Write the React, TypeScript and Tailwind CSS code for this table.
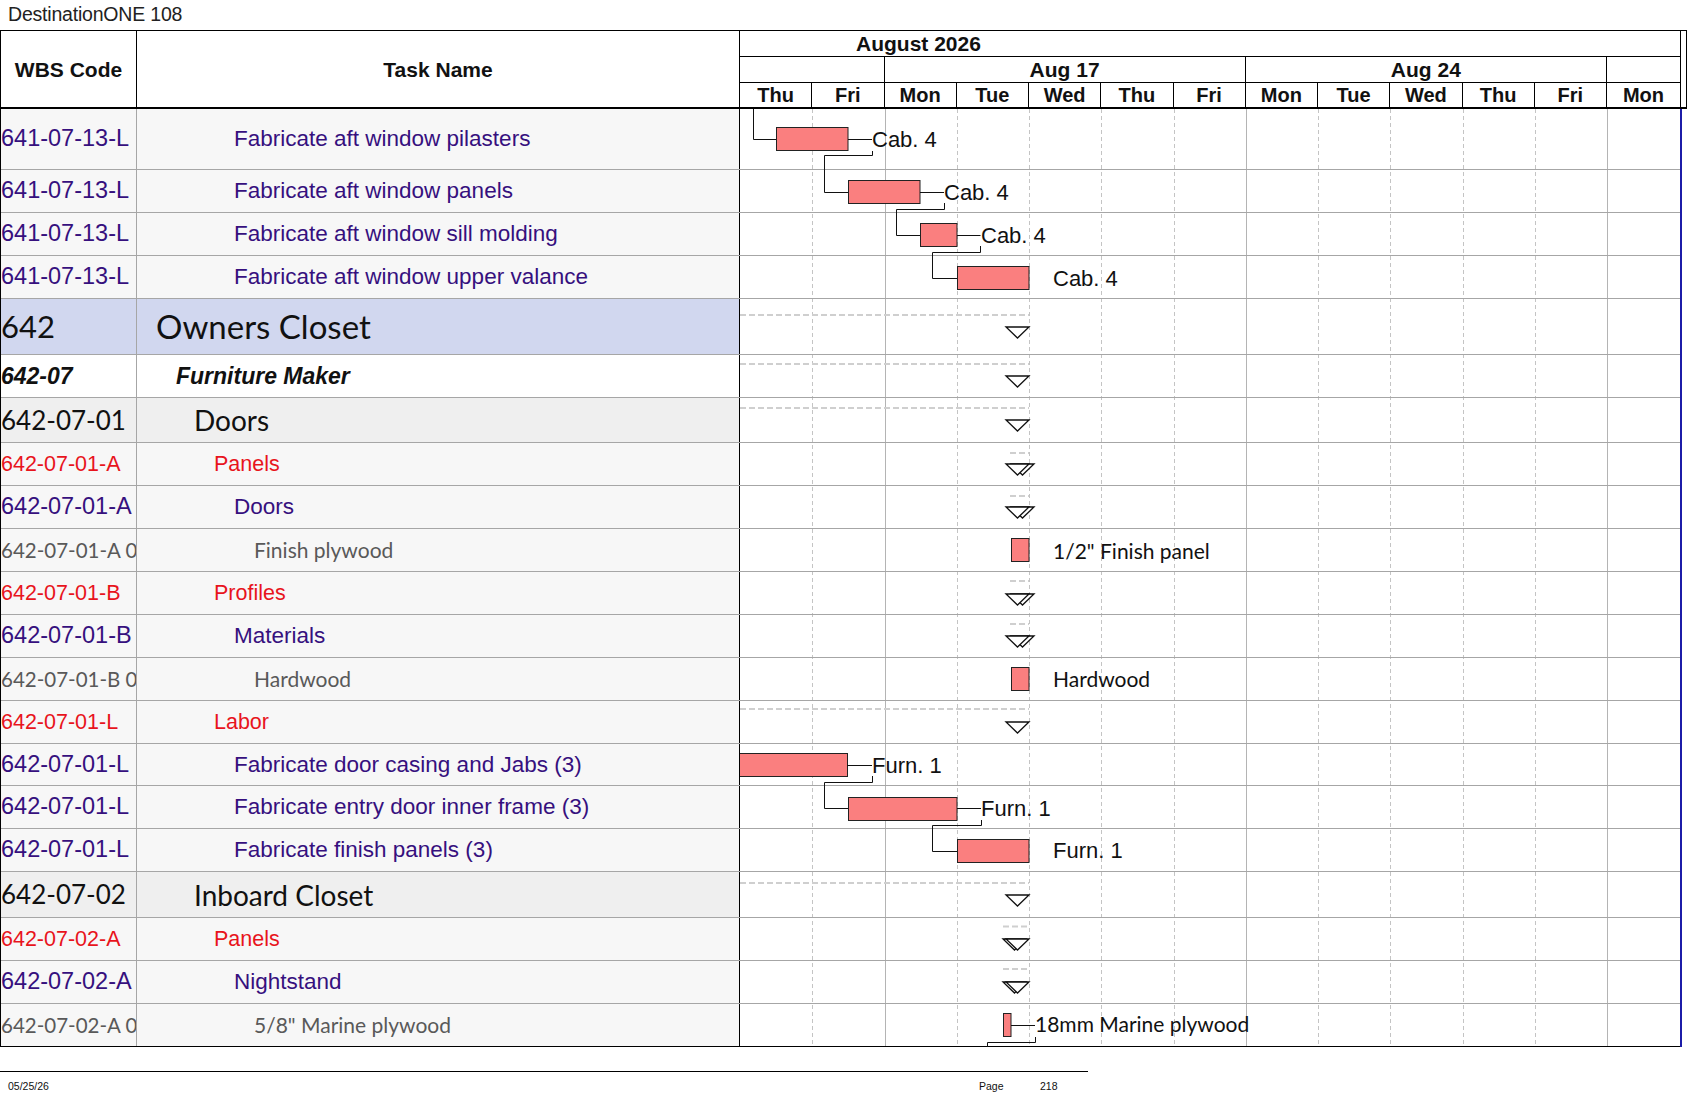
import React from "react";

type Kind = "l1" | "l2" | "l3" | "l4" | "l5" | "l6";

type Row = { h: number; wbs: string; name: string; kind: Kind };

const rows: Row[] = [
  { h: 61, wbs: "641-07-13-L", name: "Fabricate aft window pilasters", kind: "l5" },
  { h: 43, wbs: "641-07-13-L", name: "Fabricate aft window panels", kind: "l5" },
  { h: 43, wbs: "641-07-13-L", name: "Fabricate aft window sill molding", kind: "l5" },
  { h: 43, wbs: "641-07-13-L", name: "Fabricate aft window upper valance", kind: "l5" },
  { h: 56, wbs: "642", name: "Owners Closet", kind: "l1" },
  { h: 43, wbs: "642-07", name: "Furniture Maker", kind: "l2" },
  { h: 45, wbs: "642-07-01", name: "Doors", kind: "l3" },
  { h: 43, wbs: "642-07-01-A", name: "Panels", kind: "l4" },
  { h: 43, wbs: "642-07-01-A", name: "Doors", kind: "l5" },
  { h: 43, wbs: "642-07-01-A 0", name: "Finish plywood", kind: "l6" },
  { h: 43, wbs: "642-07-01-B", name: "Profiles", kind: "l4" },
  { h: 43, wbs: "642-07-01-B", name: "Materials", kind: "l5" },
  { h: 43, wbs: "642-07-01-B 0", name: "Hardwood", kind: "l6" },
  { h: 43, wbs: "642-07-01-L", name: "Labor", kind: "l4" },
  { h: 42, wbs: "642-07-01-L", name: "Fabricate door casing and Jabs (3)", kind: "l5" },
  { h: 43, wbs: "642-07-01-L", name: "Fabricate entry door inner frame (3)", kind: "l5" },
  { h: 43, wbs: "642-07-01-L", name: "Fabricate finish panels (3)", kind: "l5" },
  { h: 46, wbs: "642-07-02", name: "Inboard Closet", kind: "l3" },
  { h: 43, wbs: "642-07-02-A", name: "Panels", kind: "l4" },
  { h: 43, wbs: "642-07-02-A", name: "Nightstand", kind: "l5" },
  { h: 43, wbs: "642-07-02-A 0", name: '5/8" Marine plywood', kind: "l6" },
];

// per-level styling of the table part
const styles: Record<Kind, { bg: string; wbs: string; name: string }> = {
  l1: {
    bg: "bg-[#d1d7ef]",
    wbs: "font-['Lato','Liberation_Sans',sans-serif] text-[31px] text-[#111]",
    name: "font-['Lato','Liberation_Sans',sans-serif] text-[33px] text-[#111] pl-[19px]",
  },
  l2: {
    bg: "bg-white",
    wbs: "font-['Liberation_Sans',Arial,sans-serif] text-[23px] font-bold italic text-[#111]",
    name: "font-['Liberation_Sans',Arial,sans-serif] text-[23px] font-bold italic text-[#111] pl-[39px]",
  },
  l3: {
    bg: "bg-[#efefef]",
    wbs: "font-['Lato','Liberation_Sans',sans-serif] text-[26px] text-[#111]",
    name: "font-['Lato','Liberation_Sans',sans-serif] text-[28px] text-[#111] pl-[57px]",
  },
  l4: {
    bg: "bg-[#f7f7f7]",
    wbs: "font-['Liberation_Sans',Arial,sans-serif] text-[21.5px] text-[#e8141c]",
    name: "font-['Liberation_Sans',Arial,sans-serif] text-[21.5px] text-[#e8141c] pl-[77px]",
  },
  l5: {
    bg: "bg-[#f7f7f7]",
    wbs: "font-['Liberation_Sans',Arial,sans-serif] text-[23.5px] text-[#36107e]",
    name: "font-['Liberation_Sans',Arial,sans-serif] text-[22.5px] text-[#36107e] pl-[97px]",
  },
  l6: {
    bg: "bg-[#f7f7f7]",
    wbs: "font-['Lato','Liberation_Sans',sans-serif] text-[20.5px] text-[#595959]",
    name: "font-['Lato','Liberation_Sans',sans-serif] text-[21px] text-[#595959] pl-[117px]",
  },
};

const DAY = 72.25;
const days = ["Thu", "Fri", "Mon", "Tue", "Wed", "Thu", "Fri", "Mon", "Tue", "Wed", "Thu", "Fri", "Mon"];

const ARIAL = "'Liberation Sans', Arial, sans-serif";
const CAL = "Lato, 'Liberation Sans', sans-serif";

function Tri({ x, y }: { x: number; y: number }) {
  return (
    <polygon
      points={`${x},${y} ${x + 23},${y} ${x + 11.5},${y + 11}`}
      fill="white"
      stroke="#111"
      strokeWidth={1.3}
    />
  );
}

function Bar({ x1, x2, y }: { x1: number; x2: number; y: number }) {
  return <rect x={x1 + 0.5} y={y + 0.5} width={x2 - x1} height={23} fill="#fa7f7f" stroke="#222" strokeWidth={1} />;
}

function Link({ pts }: { pts: number[][] }) {
  return <polyline points={pts.map((p) => p.join(",")).join(" ")} fill="none" stroke="#111" strokeWidth={1} />;
}

function Chart() {
  const H = rows.reduce((s, r) => s + r.h, 0);
  let acc = 0;
  const bottoms = rows.map((r) => (acc += r.h));

  return (
    <svg width={940} height={H} className="block">
      {/* day grid */}
      {Array.from({ length: 12 }, (_, i) => {
        const x = Math.round(DAY * (i + 1)) + 0.5;
        const week = i === 1 || i === 6 || i === 11;
        return (
          <line
            key={i}
            x1={x}
            x2={x}
            y1={0}
            y2={H}
            stroke={week ? "#b4b4b4" : "#c4c4c4"}
            strokeWidth={1}
            strokeDasharray={week ? undefined : "4 3"}
          />
        );
      })}
      {/* row lines */}
      {bottoms.map((b, i) => (
        <line
          key={i}
          x1={0}
          x2={940}
          y1={b - 0.5}
          y2={b - 0.5}
          stroke={i === bottoms.length - 1 ? "#000" : "#a6a6a6"}
          strokeWidth={1}
        />
      ))}

      {/* summary bars */}
      {[206, 255, 299, 600, 774].map((y) => (
        <line key={y} x1={0} x2={289} y1={y} y2={y} stroke="#cfcfcf" strokeWidth={2} strokeDasharray="6 3" />
      ))}
      {[344, 387, 472, 515].map((y) => (
        <line key={y} x1={270} x2={289} y1={y} y2={y} stroke="#cfcfcf" strokeWidth={2} strokeDasharray="6 3" />
      ))}
      {[817.5, 860].map((y) => (
        <line key={y} x1={263} x2={289} y1={y} y2={y} stroke="#cfcfcf" strokeWidth={2} strokeDasharray="6 3" />
      ))}
      {[218, 267, 311, 613, 786].map((y) => (
        <Tri key={y} x={266} y={y} />
      ))}
      {[355, 398, 485, 527].map((y) => (
        <g key={y}>
          <Tri x={271} y={y} />
          <Tri x={266} y={y} />
        </g>
      ))}
      {[830, 873].map((y) => (
        <g key={y}>
          <Tri x={263} y={y} />
          <Tri x={266} y={y} />
        </g>
      ))}

      {/* 641-07-13-L chain */}
      <Link pts={[[13.5, 0], [13.5, 30.5], [36, 30.5]]} />
      <Bar x1={36} x2={107.5} y={18} />
      <Link pts={[[108, 30.5], [132, 30.5]]} />
      <Link pts={[[132.5, 42], [132.5, 46.5], [84.5, 46.5], [84.5, 83.5], [108, 83.5]]} />
      <Bar x1={108} x2={179.5} y={71} />
      <Link pts={[[180, 83.5], [204, 83.5]]} />
      <Link pts={[[204.5, 94], [204.5, 100.5], [156.5, 100.5], [156.5, 126.5], [180, 126.5]]} />
      <Bar x1={180} x2={216.5} y={114} />
      <Link pts={[[217, 126.5], [240.5, 126.5]]} />
      <Link pts={[[240.5, 137], [240.5, 143.5], [192.5, 143.5], [192.5, 169.5], [217, 169.5]]} />
      <Bar x1={217} x2={288.5} y={157} />

      {/* materials */}
      <Bar x1={271} x2={288.5} y={429} />
      <Bar x1={271} x2={288.5} y={558} />

      {/* labor chain */}
      <Bar x1={-2} x2={107} y={644} />
      <Link pts={[[107, 656.5], [132, 656.5]]} />
      <Link pts={[[132.5, 667], [132.5, 673.5], [84.5, 673.5], [84.5, 699.5], [108, 699.5]]} />
      <Bar x1={108} x2={216.5} y={688} />
      <Link pts={[[217, 699.5], [241, 699.5]]} />
      <Link pts={[[241.5, 711], [241.5, 716.5], [192.5, 716.5], [192.5, 742.5], [217, 742.5]]} />
      <Bar x1={217} x2={288.5} y={730} />

      {/* nightstand */}
      <Bar x1={263} x2={270.5} y={904} />
      <Link pts={[[271, 916.5], [295, 916.5]]} />
      <Link pts={[[295.5, 928], [295.5, 933.5], [247.5, 933.5], [247.5, 938]]} />

      {/* labels */}
      <g fontFamily={ARIAL} fontSize={22} fill="#111">
        <text x={132} y={37.5}>Cab. 4</text>
        <text x={204} y={91}>Cab. 4</text>
        <text x={241} y={134}>Cab. 4</text>
        <text x={313} y={177}>Cab. 4</text>
        <text x={132} y={663.5}>Furn. 1</text>
        <text x={241} y={706.5}>Furn. 1</text>
        <text x={313} y={749}>Furn. 1</text>
      </g>
      <g fontFamily={CAL} fontSize={21} fill="#111">
        <text x={313} y={450}>1/2" Finish panel</text>
        <text x={313} y={578}>Hardwood</text>
        <text x={295} y={923}>18mm Marine plywood</text>
      </g>
    </svg>
  );
}

function Header() {
  return (
    <div className="flex h-[78px] border-b-2 border-black leading-none">
      <div className="w-[136px] border-r border-black flex items-center justify-center font-['Liberation_Sans',Arial,sans-serif] font-bold text-[21px] text-[#111]">
        WBS Code
      </div>
      <div className="w-[603px] border-r border-black flex items-center justify-center font-['Liberation_Sans',Arial,sans-serif] font-bold text-[21px] text-[#111]">
        Task Name
      </div>
      <div className="w-[941px] border-r border-black flex flex-col font-['Liberation_Sans',Arial,sans-serif] font-bold text-[#111]">
        <div className="h-[26px] border-b border-black flex items-center pl-[116px] text-[21px]">August 2026</div>
        <div className="h-[26px] border-b border-black grid grid-cols-[repeat(12,72.25px)_1fr] grid-rows-1 text-[21px]">
          <div className="col-span-2 border-r border-black" />
          <div className="col-span-5 border-r border-black flex items-center justify-center">Aug 17</div>
          <div className="col-span-5 border-r border-black flex items-center justify-center">Aug 24</div>
          <div />
        </div>
        <div className="flex-1 grid grid-cols-[repeat(12,72.25px)_1fr] grid-rows-1 text-[20px]">
          {days.map((d, i) => (
            <div
              key={i}
              className={
                i < 12
                  ? "border-r border-black flex items-center justify-center"
                  : "flex items-center justify-center"
              }
            >
              {d}
            </div>
          ))}
        </div>
      </div>
      <div className="w-[6px] border-r border-black" />
    </div>
  );
}

export default function App() {
  return (
    <div className="w-[1687px] h-[1097px] bg-white overflow-hidden flex flex-col">
      <div className="h-[30px] pl-[8px] flex items-center font-['Liberation_Sans',Arial,sans-serif] text-[19.5px] text-[#222] tracking-[-0.2px]">
        DestinationONE 108
      </div>

      <div className="border-t border-l border-black">
        <Header />
        <div className="flex">
          <div className="flex flex-col">
            {rows.map((r, i) => {
              const s = styles[r.kind];
              const last = i === rows.length - 1;
              return (
                <div
                  key={i}
                  style={{ height: r.h }}
                  className={`flex ${s.bg} border-b ${last ? "border-black" : "border-[#a6a6a6]"}`}
                >
                  <div className={`w-[136px] border-r border-[#a6a6a6] flex items-center overflow-hidden whitespace-nowrap ${s.wbs}`}>
                    {r.wbs}
                  </div>
                  <div className={`w-[603px] border-r border-black flex items-center overflow-hidden whitespace-nowrap ${s.name}`}>
                    {r.name}
                  </div>
                </div>
              );
            })}
          </div>
          <div className="border-r-2 border-[#1c1ca8]">
            <Chart />
          </div>
        </div>
      </div>

      <div className="mt-[24px] w-[1088px] border-t border-black flex pt-[7px] font-['Liberation_Sans',Arial,sans-serif] text-[10.5px] text-[#111]">
        <span className="w-[979px] pl-[8px]">05/25/26</span>
        <span className="w-[61px]">Page</span>
        <span>218</span>
      </div>
    </div>
  );
}
